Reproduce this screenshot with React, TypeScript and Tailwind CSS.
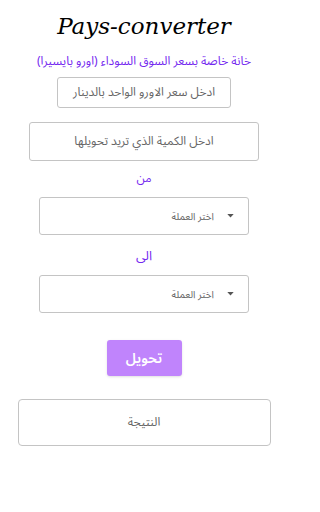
function CurrencySelect() {
  return (
    <div className="flex h-[38px] w-[210px] items-center justify-start gap-[13px] rounded-[3px] border border-[#c4c4c4] bg-white pr-[14px]">
      <svg width="7" height="4" viewBox="0 0 8 5">
        <path d="M0 0h8L4 4.5z" fill="#555" />
      </svg>
      <span className="text-[10px] text-[#666]">اختر العملة</span>
    </div>
  );
}

export default function App() {
  return (
    <div
      dir="rtl"
      className="flex min-h-[512px] w-[288px] flex-col items-center bg-white"
      style={{ fontFamily: '"Noto Sans Arabic", "Noto Sans", "DejaVu Sans", sans-serif' }}
    >
      <h1
        dir="ltr"
        className="mt-[10px] text-[23px] italic leading-[32px] text-black"
        style={{ fontFamily: '"DejaVu Serif", "Liberation Serif", serif' }}
      >
        Pays-converter
      </h1>

      <p className="mt-[12px] text-[12px] leading-[16px] text-[#7428ef]">
        خانة خاصة بسعر السوق السوداء (اورو بايسيرا)
      </p>

      <div className="mt-[7px] flex h-[31px] w-[174px] items-center justify-center rounded-[3px] border border-[#c4c4c4] text-[12px] text-[#666]">
        ادخل سعر الاورو الواحد بالدينار
      </div>

      <div className="mt-[14px] flex h-[39px] w-[230px] items-center justify-center rounded-[3px] border border-[#c4c4c4] text-[12px] text-[#666]">
        ادخل الكمية الذي تريد تحويلها
      </div>

      <p className="mt-[10px] text-[12px] leading-[16px] text-[#7428ef]">من</p>
      <div className="mt-[10px]">
        <CurrencySelect />
      </div>

      <p className="mt-[13px] text-[13px] leading-[16px] text-[#7428ef]">الى</p>
      <div className="mt-[11px]">
        <CurrencySelect />
      </div>

      <button className="mt-[27px] flex h-[36px] w-[75px] items-center justify-center rounded-[3px] bg-[#c084fc] text-[14px] font-semibold text-white shadow-sm">
        تحويل
      </button>

      <div className="mt-[23px] flex h-[47px] w-[253px] items-center justify-center rounded-[4px] border border-[#c4c4c4] text-[12px] text-[#666]">
        النتيجة
      </div>
    </div>
  );
}
